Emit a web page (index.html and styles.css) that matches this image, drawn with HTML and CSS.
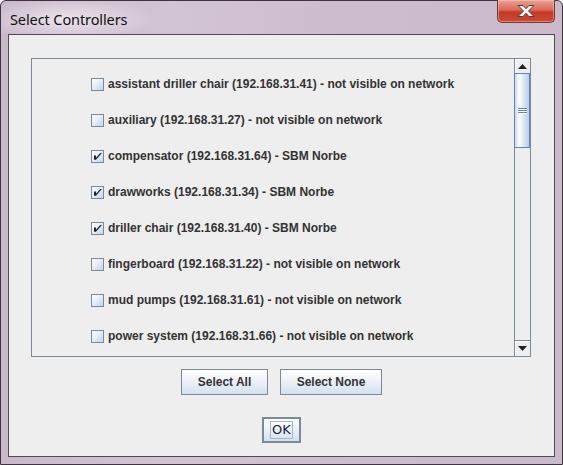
FILE: index.html
```html
<!DOCTYPE html>
<html>
<head>
<meta charset="utf-8">
<link rel="stylesheet" href="styles.css">
</head>
<body>
<div class="window">
  <div class="titlebar">
    <span class="title">Select Controllers</span>
    <div class="close">
      <svg width="24" height="14" viewBox="0 0 24 14"><path d="M4 1.5h5l3 3.2 3-3.2h5l-5.5 5.5 5.5 5.5h-5l-3-3.2-3 3.2h-5l5.5-5.5z" fill="#f4f4f4" stroke="#5a3a3a" stroke-width="1" stroke-linejoin="round"/></svg>
    </div>
  </div>
  <div class="panel">
    <div class="scrollpane">
      <div class="list">
        <div class="row"><span class="cb"></span><span class="lbl">assistant driller chair (192.168.31.41) - not visible on network</span></div>
        <div class="row"><span class="cb"></span><span class="lbl">auxiliary (192.168.31.27) - not visible on network</span></div>
        <div class="row"><span class="cb checked"><svg width="11" height="11" viewBox="0 0 11 11"><path d="M2 4.5h2v2.2l4.3-4.7h1.6l-5.9 6.8h-2z" fill="#222"/></svg></span><span class="lbl">compensator (192.168.31.64) - SBM Norbe</span></div>
        <div class="row"><span class="cb checked"><svg width="11" height="11" viewBox="0 0 11 11"><path d="M2 4.5h2v2.2l4.3-4.7h1.6l-5.9 6.8h-2z" fill="#222"/></svg></span><span class="lbl">drawworks (192.168.31.34) - SBM Norbe</span></div>
        <div class="row"><span class="cb checked"><svg width="11" height="11" viewBox="0 0 11 11"><path d="M2 4.5h2v2.2l4.3-4.7h1.6l-5.9 6.8h-2z" fill="#222"/></svg></span><span class="lbl">driller chair (192.168.31.40) - SBM Norbe</span></div>
        <div class="row"><span class="cb"></span><span class="lbl">fingerboard (192.168.31.22) - not visible on network</span></div>
        <div class="row"><span class="cb"></span><span class="lbl">mud pumps (192.168.31.61) - not visible on network</span></div>
        <div class="row"><span class="cb"></span><span class="lbl">power system (192.168.31.66) - not visible on network</span></div>
      </div>
      <div class="scrollbar">
        <div class="sb-btn up"><svg width="9" height="5" viewBox="0 0 9 5"><path d="M4.5 0L9 5H0z" fill="#222"/></svg></div>
        <div class="thumb"><div class="grip"><i></i><i></i><i></i></div></div>
        <div class="track"></div>
        <div class="sb-btn down"><svg width="9" height="5" viewBox="0 0 9 5"><path d="M0 0H9L4.5 5z" fill="#222"/></svg></div>
      </div>
    </div>
    <div class="buttons">
      <button class="btn all">Select All</button>
      <button class="btn none">Select None</button>
    </div>
    <div class="ok-row">
      <button class="btn ok"><span class="focus">OK</span></button>
    </div>
  </div>
</div>
</body>
</html>
```
FILE: styles.css
```css
* { box-sizing: border-box; }
html, body { margin: 0; padding: 0; background: #ffffff; }
body { width: 563px; height: 465px; overflow: hidden; }

.window {
  width: 563px;
  height: 465px;
  border: 1px solid #3c3540;
  border-radius: 6px 6px 0 0;
  background: linear-gradient(90deg, #c9b8ca 0%, #d3c4d4 30%, #cdbccd 60%, #cbb9cc 100%);
  padding: 0 7px 7px 7px;
  display: flex;
  flex-direction: column;
}

.titlebar {
  height: 33px;
  display: flex;
  align-items: flex-start;
  justify-content: space-between;
  background: radial-gradient(ellipse 90px 22px at 65px 18px, rgba(240,234,240,0.85), rgba(240,234,240,0) 100%);
  margin: 0 -7px;
  padding: 0 7px 0 9px;
}

.title {
  font-family: "Noto Sans", "DejaVu Sans", sans-serif;
  font-size: 14.5px;
  color: #111;
  margin-top: 8px;
  letter-spacing: -0.1px;
}

.close {
  width: 58px;
  height: 23px;
  margin-top: -1px;
  border: 1px solid #6e3a3a;
  border-top: none;
  border-radius: 0 0 5px 5px;
  background: linear-gradient(180deg, #eaa294 0%, #d86a58 45%, #c23a26 55%, #cc4a34 100%);
  display: flex;
  align-items: center;
  justify-content: center;
  box-shadow: inset 0 0 0 1px rgba(255,220,210,0.4);
}

.panel {
  flex: 1;
  background: #eeeeee;
  border: 1px solid #4e4a50;
  display: flex;
  flex-direction: column;
  align-items: center;
}

.scrollpane {
  align-self: flex-start;
  width: 500px;
  height: 299px;
  margin-top: 23px;
  margin-left: 22px;
  border: 1px solid #7a8a99;
  display: flex;
  background: #eeeeee;
  overflow: hidden;
}

.list {
  flex: 1;
  padding-top: 7px;
  padding-left: 59px;
  display: flex;
  flex-direction: column;
}

.row {
  height: 36px;
  display: flex;
  align-items: center;
  gap: 4px;
}

.cb {
  width: 13px;
  height: 13px;
  border: 1px solid #7a8a99;
  background: linear-gradient(135deg, #ffffff 0%, #e6eef7 45%, #c4d5e8 100%);
  display: flex;
  align-items: center;
  justify-content: center;
  flex: none;
}

.lbl {
  font-family: "Liberation Sans", Arial, sans-serif;
  font-weight: bold;
  font-size: 12px;
  color: #333333;
  white-space: nowrap;
}

.scrollbar {
  width: 16px;
  display: flex;
  flex-direction: column;
  border-left: 1px solid #7a8a99;
  background: #eeeeee;
}

.sb-btn {
  height: 16px;
  display: flex;
  align-items: center;
  justify-content: center;
  background: #eeeeee;
  box-shadow: inset 1px 1px 0 #ffffff;
}
.sb-btn.up { height: 15px; border-bottom: 1px solid #6382bf; }
.sb-btn.down { border-top: 1px solid #7a8a99; }

.thumb {
  height: 74px;
  margin-left: -1px;
  border: 1px solid #6382bf;
  border-top: none;
  background: linear-gradient(90deg, #c8d9ec 0%, #ffffff 30%, #e2ecf7 55%, #b9cfe6 100%);
  display: flex;
  align-items: center;
  justify-content: center;
}

.grip {
  display: flex;
  flex-direction: column;
  gap: 1px;
}
.grip i {
  display: block;
  width: 9px;
  height: 1px;
  background: #6382bf;
  box-shadow: 0 1px 0 #ffffff;
}

.track { flex: 1; }

.buttons {
  margin-top: 12px;
  display: flex;
  gap: 12px;
}

.btn {
  font-family: "Liberation Sans", Arial, sans-serif;
  font-weight: bold;
  font-size: 12px;
  color: #333333;
  height: 26px;
  border: 1px solid #7a8a99;
  background: linear-gradient(180deg, #ffffff 0%, #f0f4f9 40%, #d4e1ef 100%);
  padding: 0;
  display: flex;
  align-items: center;
  justify-content: center;
}
.btn.all { width: 87px; }
.btn.none { width: 102px; }

.ok-row {
  margin-top: 22px;
  display: flex;
}

.btn.ok {
  width: 39px;
  border: 2px solid #7a8a99;
  color: #1a1a40;
  font-size: 13px;
  font-weight: normal;
  font-family: "DejaVu Sans", sans-serif;
}
.focus {
  border: 1px solid #a3b8cc;
  padding: 0 1px;
  line-height: 16px;
}
```
